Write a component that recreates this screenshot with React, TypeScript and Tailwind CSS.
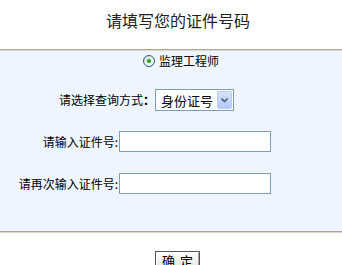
import React from "react";

export default function App() {
  const font = { fontFamily: '"Noto Sans CJK SC", "Noto Sans", sans-serif' };
  return (
    <div className="w-[342px] h-[265px] bg-white overflow-hidden text-black" style={font}>
      <div className="h-[49px] pt-[11px] pl-[14px] text-center text-[16px] leading-[18px] text-[#222]">
        请填写您的证件号码
      </div>
      <div className="h-px bg-[#aca899]" />
      <div className="h-px bg-[#dcd9cc]" />
      <div className="h-[180px] bg-[#eef5fe] flex flex-col text-[12px]">
        <div className="h-[20px] flex items-center pl-[143px]">
          <span className="w-[12px] h-[12px] rounded-full border border-[#2c5a86] bg-gradient-to-br from-[#dcdcd6] to-white flex items-center justify-center">
            <span className="w-[4px] h-[4px] rounded-full bg-[#21a121]" />
          </span>
          <span className="ml-[4px] leading-[14px]">监理工程师</span>
        </div>
        <div className="mt-[18px] h-[22px] flex items-center">
          <div className="w-[150px] flex justify-end items-center leading-[14px]">
            <span>请选择查询方式</span>
            <span className="w-[7px] font-bold overflow-visible whitespace-nowrap">：</span>
          </div>
          <div className="ml-[5px] w-[79px] h-[22px] border border-[#7f9db9] bg-white flex items-center justify-between pl-[5px] pr-[1px]">
            <span className="text-[13px] leading-[15px]">身份证号</span>
            <span className="w-[15px] h-[18px] rounded-[2px] bg-gradient-to-b from-[#d6e2fc] to-[#b4c8f6] border border-[#b9cbf3] flex items-center justify-center">
              <svg width="7" height="5" viewBox="0 0 7 5">
                <path d="M0.5 0.5 L3.5 3.5 L6.5 0.5" fill="none" stroke="#4d6185" strokeWidth="1.6" />
              </svg>
            </span>
          </div>
        </div>
        <div className="mt-[20px] h-[21px] flex items-center">
          <div className="w-[118px] text-right leading-[14px]">请输入证件号:</div>
          <div className="ml-[1px] w-[152px] h-[21px] border border-[#7f9db9] bg-white" />
        </div>
        <div className="mt-[21px] h-[21px] flex items-center">
          <div className="w-[118px] text-right leading-[14px]">请再次输入证件号:</div>
          <div className="ml-[1px] w-[152px] h-[21px] border border-[#7f9db9] bg-white" />
        </div>
      </div>
      <div className="h-px bg-[#aca899]" />
      <div className="h-px bg-[#dcd9cc]" />
      <div className="mt-[18px] pl-[155px]">
        <div className="w-[45px] h-[22px] border border-[#555] bg-gradient-to-b from-white to-[#e2e0d8] shadow-[inset_1px_1px_0_#ffffff,inset_-1px_-1px_0_#a0a0a0] flex items-start justify-center gap-[5px] pt-[1px] text-[13px] leading-[15px]">
          <span>确</span>
          <span>定</span>
        </div>
      </div>
    </div>
  );
}
